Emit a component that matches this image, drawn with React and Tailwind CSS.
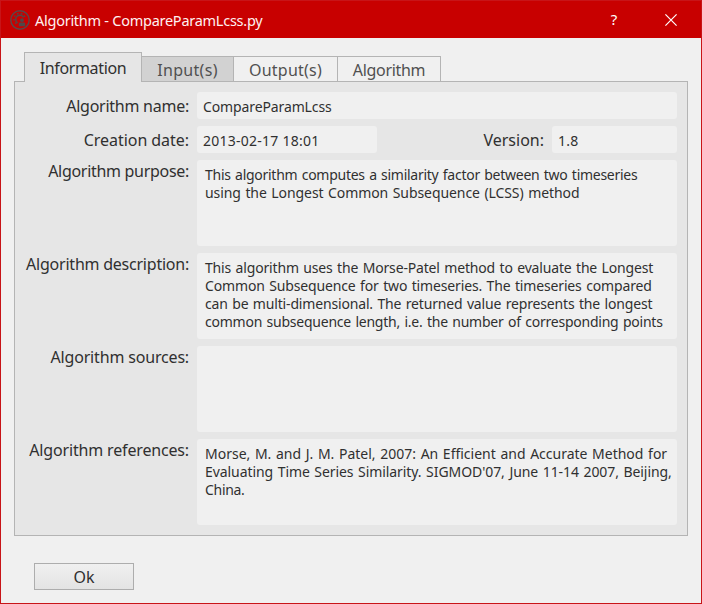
function AppIcon() {
  return (
    <svg className="h-5 w-5 shrink-0" viewBox="0 0 20 20" fill="none">
      <circle cx="10" cy="10" r="9.2" stroke="#5a4848" strokeWidth="1.4" />
      <path d="M7.6 12.9A4.2 4.2 0 1 1 13.6 7.4" stroke="#504848" strokeWidth="1.4" />
      <path d="M6.4 13.6A5.6 5.6 0 1 1 15.2 8.6" stroke="#504848" strokeWidth="1.4" strokeDasharray="1.6 2.2" />
      <path d="M8.8 16.2v-2.4q0-1.2 1.2-1.2h4q1.2 0 1.2 1.2v2.4z" fill="#504848" />
      <circle cx="12" cy="10.2" r="1.9" fill="#504848" />
    </svg>
  );
}

function Label({ children, tracking = "" }) {
  return (
    <div className="flex h-[27px] w-[175px] shrink-0 items-start justify-end pr-[1px]">
      <span className={`whitespace-nowrap text-base leading-[22px] ${tracking}`}>{children}</span>
    </div>
  );
}

function Area({ lines = [] }) {
  return (
    <div className="h-[86px] w-[480px] rounded-[3px] bg-[#f0f0f0] pl-2 pt-[6px] text-sm leading-[18px] [word-spacing:1px]">
      {lines.map(([text, tracking]) => (
        <div key={text} className={`whitespace-nowrap ${tracking}`}>{text}</div>
      ))}
    </div>
  );
}

function Field({ width, children }) {
  return (
    <div className={`h-[27px] rounded-[3px] bg-[#f0f0f0] pl-[6px] text-sm leading-[29px] ${width}`}>{children}</div>
  );
}

export default function App() {
  return (
    <div className="flex h-[604px] w-[702px] flex-col border border-[#c81418] bg-[#f0f0f0] font-['Noto_Sans',sans-serif] text-[#303030]">
      <header className="flex h-[37px] shrink-0 items-center bg-[#c80000] pl-[9px] text-white">
        <AppIcon />
        <span className="ml-[5px] text-[14.5px] leading-5 tracking-[-0.26px] text-[#fff0f0]">Algorithm - CompareParamLcss.py</span>
        <span className="ml-auto w-[10px] text-center text-[15px]">?</span>
        <svg className="ml-[46px] mr-[24px] h-3 w-3" viewBox="0 0 12 12" stroke="white" strokeWidth="1.2">
          <path d="M.4.4 11.6 11.6M11.6.4.4 11.6" />
        </svg>
      </header>

      <nav className="relative z-10 mt-[14px] flex h-[30px] shrink-0 items-end pl-[23px] text-base">
        <div className="h-[30px] w-[118px] border border-b-0 border-[#b4b4b4] bg-[#e6e6e6] text-center leading-[31px] tracking-[-0.36px]">Information</div>
        <div className="h-[26px] w-[92px] border-y border-r border-[#b4b4b4] bg-[#d2d2d2] text-center leading-[27px] tracking-[0.3px] text-[#505050]">Input(s)</div>
        <div className="h-[26px] w-[104px] border-y border-r border-[#b4b4b4] text-center leading-[27px] tracking-[0.25px] text-[#505050]">Output(s)</div>
        <div className="h-[26px] w-[103px] border-y border-r border-[#b4b4b4] text-center leading-[27px] tracking-[-0.33px] text-[#505050]">Algorithm</div>
      </nav>

      <main className="-mt-px ml-[13px] flex h-[455px] w-[674px] shrink-0 flex-col gap-[7px] border border-[#b4b4b4] bg-[#e6e6e6] pt-[10px]">
        <div className="flex gap-[7px]">
          <Label tracking="tracking-[-0.25px] pt-[3px]">Algorithm name:</Label>
          <Field width="w-[480px] tracking-[-0.12px]">CompareParamLcss</Field>
        </div>
        <div className="flex gap-[7px]">
          <Label tracking="tracking-[-0.05px] pt-[3px]">Creation date:</Label>
          <Field width="w-[180px] tracking-[0.25px]">2013-02-17 18:01</Field>
          <div className="flex w-[161px] justify-end pr-px pt-[3px] text-base leading-[22px]">Version:</div>
          <Field width="w-[125px] tracking-[0.25px]">1.8</Field>
        </div>
        <div className="flex gap-[7px]">
          <Label tracking="tracking-[-0.3px]">Algorithm purpose:</Label>
          <Area lines={[
            ["This algorithm computes a similarity factor between two timeseries", "tracking-[-0.27px]"],
            ["using the Longest Common Subsequence (LCSS) method", "tracking-[-0.08px]"],
          ]} />
        </div>
        <div className="flex gap-[7px]">
          <Label tracking="tracking-[-0.23px]">Algorithm description:</Label>
          <Area lines={[
            ["This algorithm uses the Morse-Patel method to evaluate the Longest", "tracking-[-0.165px]"],
            ["Common Subsequence for two timeseries. The timeseries compared", "tracking-[-0.15px]"],
            ["can be multi-dimensional. The returned value represents the longest", "tracking-[-0.165px]"],
            ["common subsequence length, i.e. the number of corresponding points", "tracking-[-0.23px]"],
          ]} />
        </div>
        <div className="flex gap-[7px]">
          <Label tracking="tracking-[-0.17px]">Algorithm sources:</Label>
          <Area />
        </div>
        <div className="flex gap-[7px]">
          <Label tracking="tracking-[-0.16px]">Algorithm references:</Label>
          <Area lines={[
            ["Morse, M. and J. M. Patel, 2007: An Efficient and Accurate Method for", "tracking-[-0.005px]"],
            ["Evaluating Time Series Similarity. SIGMOD'07, June 11-14 2007, Beijing,", "tracking-[-0.07px]"],
            ["China.", "tracking-[-0.3px]"],
          ]} />
        </div>
      </main>

      <button className="ml-[33px] mt-[27px] h-[27px] w-[100px] shrink-0 border border-[#adadad] bg-linear-to-b from-[#f0f0f0] to-[#e3e3e3] text-base leading-[26px]">Ok</button>
    </div>
  );
}
